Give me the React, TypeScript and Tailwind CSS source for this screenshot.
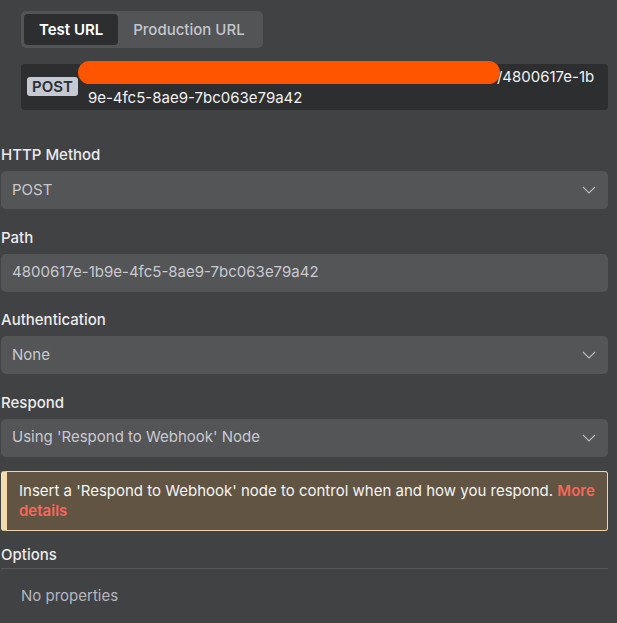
import React from 'react';

const font = { fontFamily: 'Inter, "Noto Sans", sans-serif' };

function Chevron() {
  return (
    <svg width="14" height="8" viewBox="0 0 14 8" fill="none" className="shrink-0">
      <path d="M1 1l6 6 6-6" stroke="#b9bcc2" strokeWidth="1.1" />
    </svg>
  );
}

function Field({ label, value, select = true }: { label: string; value: string; select?: boolean }) {
  return (
    <div className="flex flex-col gap-[6px]">
      <div className="h-5 text-[15px] leading-5 font-medium text-[#ececec]">{label}</div>
      <div className="h-[38px] rounded-[5px] bg-[#545557] pl-[11px] pr-[12px] flex items-center justify-between">
        <span className="text-[15px] text-[#c8cad0]">{value}</span>
        {select && <Chevron />}
      </div>
    </div>
  );
}

export default function App() {
  return (
    <div className="min-h-[623px] w-[617px] bg-[#414244] pt-[11px]" style={font}>
      {/* Webhook URLs */}
      <div className="pl-[21px] pr-[9px]">
        <div className="inline-flex p-[3px] rounded-[5px] bg-[#535456]">
          <div className="h-[31px] px-[15px] pt-[1px] rounded-[4px] bg-[#2d2e30] flex items-center text-[15px] font-semibold text-white">Test URL</div>
          <div className="h-[31px] px-[15px] pt-[1px] flex items-center text-[15px] font-medium text-[#c4c6cc]">Production URL</div>
        </div>

        <div className="relative mt-[16px] rounded-[4px] bg-[#2d2e30] pl-[6px] pr-[10px] pt-[2px] pb-[2px] flex items-start">
          <span className="mt-[11px] shrink-0 rounded-[3px] bg-[#c5c9d4] px-[5px] h-[19px] leading-[19px] text-[15px] font-semibold text-[#2d2e30]">POST</span>
          <div className="ml-[10px] text-[15px] leading-[21px] text-[#f2f2f2] break-all">
            <span className="inline-block w-[409px]" />/4800617e-1b9e-4fc5-8ae9-7bc063e79a42
          </div>
          <div className="absolute left-[57px] top-[-3px] w-[422px] h-[23px] rounded-full bg-[#ff5500]" />
        </div>
      </div>

      {/* Parameters */}
      <div className="mt-[35px] ml-[1px] mr-[9px] flex flex-col gap-[18.5px]">
        <Field label="HTTP Method" value="POST" />
        <Field label="Path" value="4800617e-1b9e-4fc5-8ae9-7bc063e79a42" select={false} />
        <Field label="Authentication" value="None" />
        <Field label="Respond" value="Using 'Respond to Webhook' Node" />
      </div>

      <div className="mt-[14px] ml-[1px] mr-[9px] rounded-[3px] border border-[#f0d6a6] border-l-[6px] border-l-[#f5dcae] bg-[#615443] pl-[12px] pr-[10px] py-[9px] text-[15px] leading-5 text-[#f4f4f4]">
        Insert a 'Respond to Webhook' node to control when and how you respond.{' '}
        <span className="font-semibold text-[#f7685b]">More details</span>
      </div>

      <div className="mt-[14px] ml-[1px] mr-[9px]">
        <div className="h-5 leading-5 text-[15px] font-medium text-[#ececec]">Options</div>
        <div className="mt-[3px] border-t border-[#56575a]" />
        <div className="pl-5 pt-[17px] text-[15px] leading-5 text-[#b4b7be]">No properties</div>
      </div>
    </div>
  );
}
